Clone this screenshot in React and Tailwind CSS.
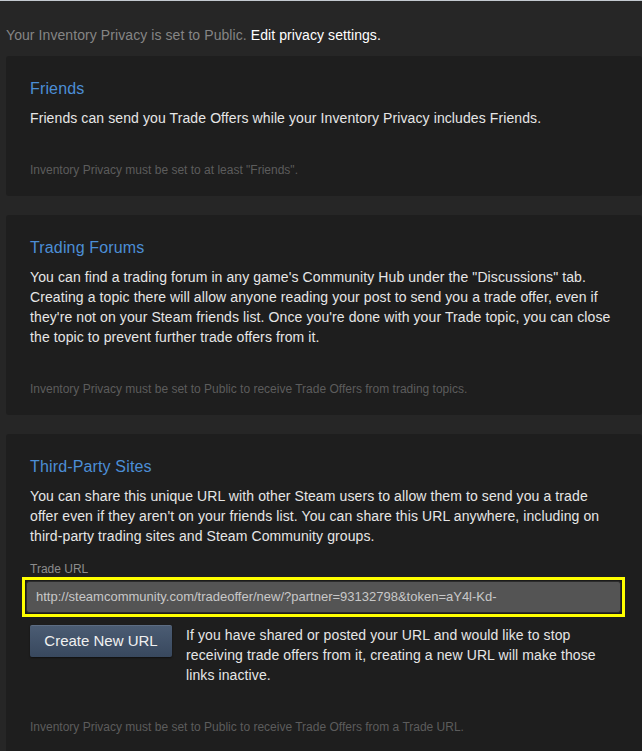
import { useState } from "react";

const Section = ({ title, children, note, first }) => {
    return (
        <div className={"ml-[6px] rounded-[3px] bg-[#1e1e1e] pl-[24px] pr-[16px] pt-[23px] pb-[17px] " + (first ? "" : "mt-[19px]")}>
            <h2 className="text-[16px] leading-[20px] tracking-[0.15px] text-[#4c8ed6]">{title}</h2>
            <div className="mt-[9px]">{children}</div>
            <div className="mt-[33px] text-[12px] leading-[18px] text-[#5c5c5c]">{note}</div>
        </div>
    )
}

const App = () => {
    const [tradeUrl] = useState("http://steamcommunity.com/tradeoffer/new/?partner=93132798&token=aY4l-Kd-");

    return (
        <div className="min-h-[751px] w-[642px] overflow-hidden border-t border-[#c3c9d0] bg-[#262626] font-['Liberation_Sans',Arial,sans-serif]">
            <div className="h-[55px] px-[6px] pt-[26px] text-[14px] leading-[16px] tracking-[0.08px] text-[#858585]">
                Your Inventory Privacy is set to Public. <span className="text-white">Edit privacy settings.</span>
            </div>

            <Section
                first
                title="Friends"
                note={'Inventory Privacy must be set to at least "Friends".'}
            >
                <p className="text-[14px] leading-[20px] tracking-[0.1px] text-[#e6e6e6]">
                    Friends can send you Trade Offers while your Inventory Privacy includes Friends.
                </p>
            </Section>

            <Section
                title="Trading Forums"
                note="Inventory Privacy must be set to Public to receive Trade Offers from trading topics."
            >
                <p className="text-[14px] leading-[20px] tracking-[0.1px] text-[#e6e6e6]">
                    You can find a trading forum in any game's Community Hub under the "Discussions" tab.<br />
                    Creating a topic there will allow anyone reading your post to send you a trade offer, even if<br />
                    they're not on your Steam friends list. Once you're done with your Trade topic, you can close<br />
                    the topic to prevent further trade offers from it.
                </p>
            </Section>

            <Section
                title="Third-Party Sites"
                note="Inventory Privacy must be set to Public to receive Trade Offers from a Trade URL."
            >
                <p className="text-[14px] leading-[20px] tracking-[0.1px] text-[#e6e6e6]">
                    You can share this unique URL with other Steam users to allow them to send you a trade<br />
                    offer even if they aren't on your friends list. You can share this URL anywhere, including on<br />
                    third-party trading sites and Steam Community groups.
                </p>
                <div className="mt-[15px] text-[12px] leading-[16px] text-[#8c8c8c]">Trade URL</div>
                <div className="-ml-[8px] mr-[1px] border-[3px] border-[#ffff00] bg-[#1b1b1b] p-[1px]">
                    <div className="flex h-[32px] items-center rounded-[3px] border border-[#2c2c2c] bg-[#545454] px-[9px] text-[13px] text-[#c8c8c8]">
                        {tradeUrl}
                    </div>
                </div>
                <div className="mt-[8px] flex items-start gap-[14px]">
                    <button className="h-[32px] w-[142px] shrink-0 rounded-[2px] border-t border-[#5d6d83] bg-gradient-to-b from-[#4b5c73] to-[#38485e] text-[15px] text-[#f0f0f0] shadow-[0_1px_2px_rgba(0,0,0,0.5)]">
                        Create New URL
                    </button>
                    <p className="text-[14px] leading-[20px] tracking-[0.1px] text-[#e6e6e6]">
                        If you have shared or posted your URL and would like to stop<br />
                        receiving trade offers from it, creating a new URL will make those<br />
                        links inactive.
                    </p>
                </div>
            </Section>
        </div>
    )
}

export default App;
